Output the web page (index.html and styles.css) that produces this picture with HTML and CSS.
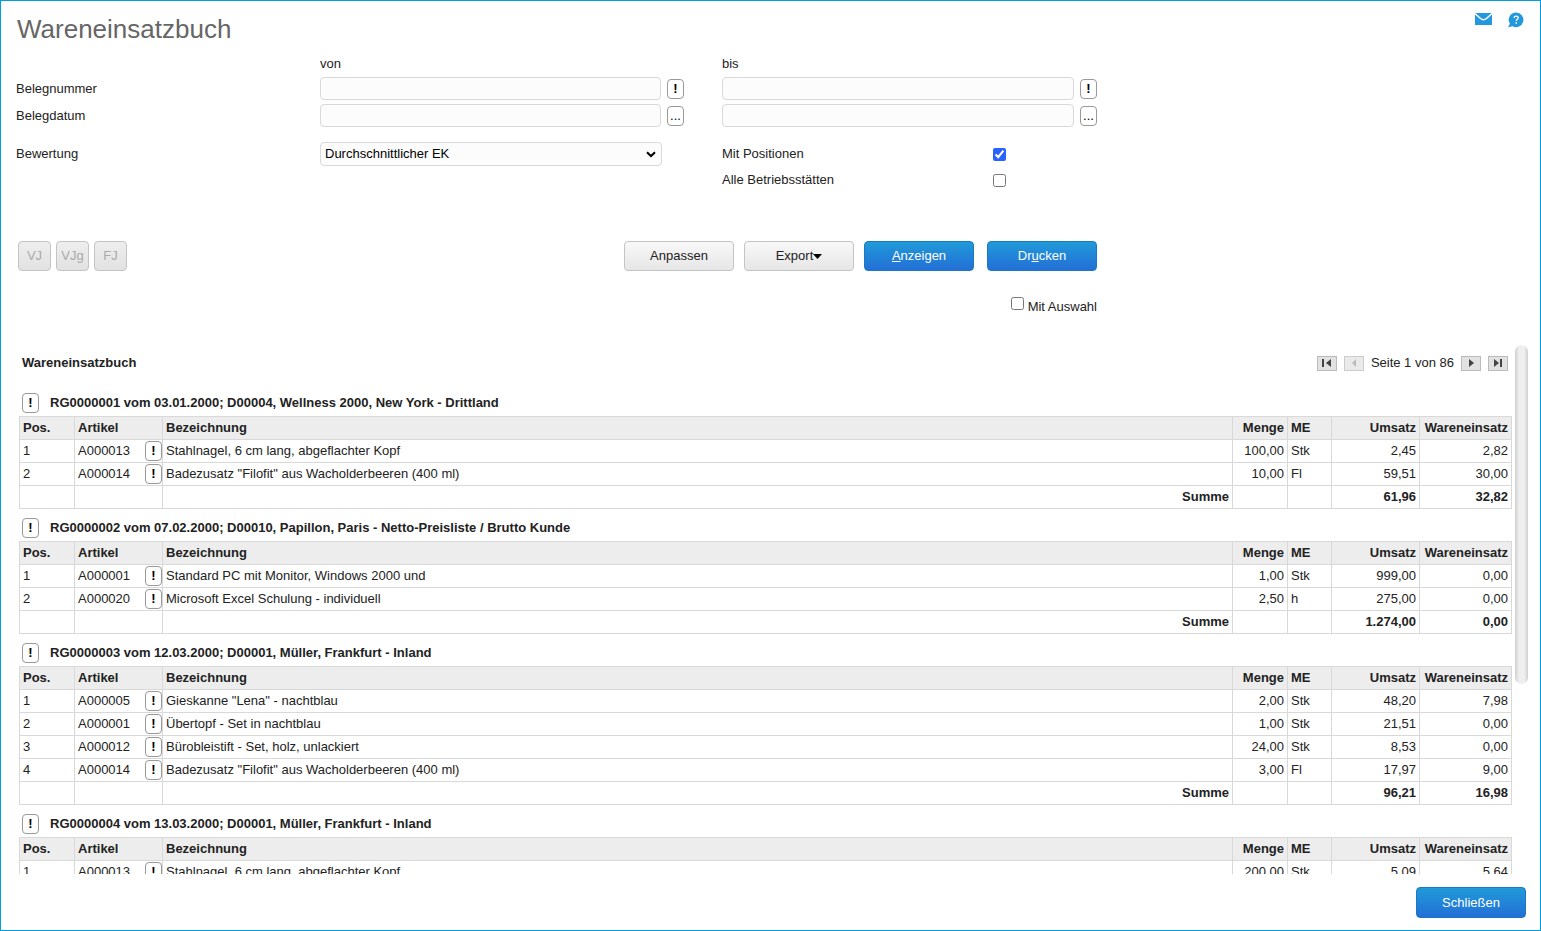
FILE: index.html
```html
<!DOCTYPE html>
<html lang="de">
<head>
<meta charset="utf-8">
<title>Wareneinsatzbuch</title>
<link rel="stylesheet" href="styles.css">
</head>
<body>
<div class="window">
  <header class="topbar">
    <h1 class="title">Wareneinsatzbuch</h1>
    <div class="tools">
      <button class="tool" type="button" aria-label="Nachricht">
        <svg width="18" height="14" viewBox="0 0 18 14"><rect x="0" y="1" width="17" height="12" fill="#2498de"/><path d="M0 1.500 5.500 6.500Q8.500 9 11.500 6.500L17 1.500" fill="none" stroke="#fff" stroke-width="1.500"/></svg>
      </button>
      <button class="tool" type="button" aria-label="Hilfe">
        <svg width="18" height="16" viewBox="0 0 18 16"><path d="M9.200 .5a7.300 7.300 0 1 1-3.600 13.700L1 15.200l1.900-3.500A7.300 7.300 0 0 1 9.200.5z" fill="#2498de"/><path d="M7.200 6c0-2.600 4-2.400 4-.2 0 1.400-2 1.500-2 3.300" fill="none" stroke="#fff" stroke-width="1.300"/><rect x="8.500" y="10.200" width="1.500" height="1.500" fill="#fff"/></svg>
      </button>
    </div>
  </header>

  <form class="form">
    <div class="filters">
      <span class="head head-from">von</span>
      <span class="head">bis</span>

      <label for="nr-from">Belegnummer</label>
      <div class="field field-from"><input class="text" id="nr-from" type="text"><button class="mini" type="button">!</button></div>
      <div class="field"><input class="text" id="nr-to" type="text" aria-label="Belegnummer bis"><button class="mini" type="button">!</button></div>

      <label for="date-from">Belegdatum</label>
      <div class="field field-from"><input class="text" id="date-from" type="text"><button class="mini mini-dots" type="button">...</button></div>
      <div class="field"><input class="text" id="date-to" type="text" aria-label="Belegdatum bis"><button class="mini mini-dots" type="button">...</button></div>
    </div>

    <div class="filters options">
      <label for="rating">Bewertung</label>
      <div class="select-box">
        <select class="select" id="rating"><option>Durchschnittlicher EK</option></select>
        <svg class="chevron" width="10" height="7" viewBox="0 0 10 7"><path d="M1 1.200 5 5 9 1.200" fill="none" stroke="#000" stroke-width="2"/></svg>
      </div>
      <div class="check-row"><label for="with-pos">Mit Positionen</label><input class="check" id="with-pos" type="checkbox" checked></div>
      <div class="check-row check-last"><label for="all-sites">Alle Betriebsstätten</label><input class="check" id="all-sites" type="checkbox"></div>
    </div>

    <div class="actions">
      <button class="btn btn-year" type="button" disabled>VJ</button>
      <button class="btn btn-year" type="button" disabled>VJg</button>
      <button class="btn btn-year" type="button" disabled>FJ</button>
      <div class="main-actions">
        <button class="btn" type="button">Anpassen</button>
        <button class="btn" type="button">Export<svg width="9" height="5" viewBox="0 0 9 5"><path d="M0 0h9L4.500 5z"/></svg></button>
        <button class="btn btn-primary" type="button"><span><u>A</u>nzeigen</span></button>
        <button class="btn btn-primary btn-print" type="button"><span>Dr<u>u</u>cken</span></button>
      </div>
    </div>
    <div class="selection"><input class="check" id="sel" type="checkbox"><label for="sel">Mit Auswahl</label></div>
  </form>

  <main class="report">
    <div class="report-body">
      <div class="report-head">
        <h2 class="report-title">Wareneinsatzbuch</h2>
        <nav class="pager">
          <button class="page" type="button" aria-label="Erste Seite"><svg width="10" height="8" viewBox="0 0 10 8"><path d="M0 0h2v8H0zM9 0v8L4 4z"/></svg></button>
          <button class="page" type="button" aria-label="Vorherige Seite" disabled><svg width="10" height="8" viewBox="0 0 10 8"><path d="M7 0v8L3 4z"/></svg></button>
          <span>Seite 1 von 86</span>
          <button class="page" type="button" aria-label="Nächste Seite"><svg width="10" height="8" viewBox="0 0 10 8"><path d="M3 0v8l5-4z"/></svg></button>
          <button class="page" type="button" aria-label="Letzte Seite"><svg width="10" height="8" viewBox="0 0 10 8"><path d="M1 0v8l5-4zM7 0h2v8H7z"/></svg></button>
        </nav>
      </div>

      <h3 class="doc"><button class="mini" type="button">!</button>RG0000001 vom 03.01.2000; D00004, Wellness 2000, New York - Drittland</h3>
      <table class="items">
        <thead><tr><th class="c-pos">Pos.</th><th class="c-art">Artikel</th><th>Bezeichnung</th><th class="c-qty num">Menge</th><th class="c-unit">ME</th><th class="c-sum num">Umsatz</th><th class="c-cost num">Wareneinsatz</th></tr></thead>
        <tbody>
          <tr><td>1</td><td><div class="art">A000013<button class="mini" type="button">!</button></div></td><td>Stahlnagel, 6 cm lang, abgeflachter Kopf</td><td class="num">100,00</td><td>Stk</td><td class="num">2,45</td><td class="num">2,82</td></tr>
          <tr><td>2</td><td><div class="art">A000014<button class="mini" type="button">!</button></div></td><td>Badezusatz "Filofit" aus Wacholderbeeren (400 ml)</td><td class="num">10,00</td><td>Fl</td><td class="num">59,51</td><td class="num">30,00</td></tr>
          <tr class="total"><td></td><td></td><td class="num">Summe</td><td></td><td></td><td class="num">61,96</td><td class="num">32,82</td></tr>
        </tbody>
      </table>

      <h3 class="doc"><button class="mini" type="button">!</button>RG0000002 vom 07.02.2000; D00010, Papillon, Paris - Netto-Preisliste / Brutto Kunde</h3>
      <table class="items">
        <thead><tr><th class="c-pos">Pos.</th><th class="c-art">Artikel</th><th>Bezeichnung</th><th class="c-qty num">Menge</th><th class="c-unit">ME</th><th class="c-sum num">Umsatz</th><th class="c-cost num">Wareneinsatz</th></tr></thead>
        <tbody>
          <tr><td>1</td><td><div class="art">A000001<button class="mini" type="button">!</button></div></td><td>Standard PC mit Monitor, Windows 2000 und</td><td class="num">1,00</td><td>Stk</td><td class="num">999,00</td><td class="num">0,00</td></tr>
          <tr><td>2</td><td><div class="art">A000020<button class="mini" type="button">!</button></div></td><td>Microsoft Excel Schulung - individuell</td><td class="num">2,50</td><td>h</td><td class="num">275,00</td><td class="num">0,00</td></tr>
          <tr class="total"><td></td><td></td><td class="num">Summe</td><td></td><td></td><td class="num">1.274,00</td><td class="num">0,00</td></tr>
        </tbody>
      </table>

      <h3 class="doc"><button class="mini" type="button">!</button>RG0000003 vom 12.03.2000; D00001, Müller, Frankfurt - Inland</h3>
      <table class="items">
        <thead><tr><th class="c-pos">Pos.</th><th class="c-art">Artikel</th><th>Bezeichnung</th><th class="c-qty num">Menge</th><th class="c-unit">ME</th><th class="c-sum num">Umsatz</th><th class="c-cost num">Wareneinsatz</th></tr></thead>
        <tbody>
          <tr><td>1</td><td><div class="art">A000005<button class="mini" type="button">!</button></div></td><td>Gieskanne "Lena" - nachtblau</td><td class="num">2,00</td><td>Stk</td><td class="num">48,20</td><td class="num">7,98</td></tr>
          <tr><td>2</td><td><div class="art">A000001<button class="mini" type="button">!</button></div></td><td>Übertopf - Set in nachtblau</td><td class="num">1,00</td><td>Stk</td><td class="num">21,51</td><td class="num">0,00</td></tr>
          <tr><td>3</td><td><div class="art">A000012<button class="mini" type="button">!</button></div></td><td>Bürobleistift - Set, holz, unlackiert</td><td class="num">24,00</td><td>Stk</td><td class="num">8,53</td><td class="num">0,00</td></tr>
          <tr><td>4</td><td><div class="art">A000014<button class="mini" type="button">!</button></div></td><td>Badezusatz "Filofit" aus Wacholderbeeren (400 ml)</td><td class="num">3,00</td><td>Fl</td><td class="num">17,97</td><td class="num">9,00</td></tr>
          <tr class="total"><td></td><td></td><td class="num">Summe</td><td></td><td></td><td class="num">96,21</td><td class="num">16,98</td></tr>
        </tbody>
      </table>

      <h3 class="doc"><button class="mini" type="button">!</button>RG0000004 vom 13.03.2000; D00001, Müller, Frankfurt - Inland</h3>
      <table class="items">
        <thead><tr><th class="c-pos">Pos.</th><th class="c-art">Artikel</th><th>Bezeichnung</th><th class="c-qty num">Menge</th><th class="c-unit">ME</th><th class="c-sum num">Umsatz</th><th class="c-cost num">Wareneinsatz</th></tr></thead>
        <tbody>
          <tr><td>1</td><td><div class="art">A000013<button class="mini" type="button">!</button></div></td><td>Stahlnagel, 6 cm lang, abgeflachter Kopf</td><td class="num">200,00</td><td>Stk</td><td class="num">5,09</td><td class="num">5,64</td></tr>
        </tbody>
      </table>
    </div>
    <div class="scrollbar"><div class="thumb"></div></div>
  </main>

  <footer class="footer"><button class="btn btn-primary" type="button">Schließen</button></footer>
</div>
</body>
</html>
```
FILE: styles.css
```css
* { box-sizing: border-box; }
body {
  margin: 0;
  font: 13px/16px "Liberation Sans", Arial, sans-serif;
  color: #222;
  background: #fff;
}
button, input, select { font: inherit; color: inherit; margin: 0; }
h1, h2, h3 { margin: 0; font-size: 13px; }

.window {
  display: flex;
  flex-direction: column;
  height: 100vh;
  border: 1px solid #009fe3;
}

.topbar {
  display: flex;
  justify-content: space-between;
  padding: 11px 15px 0 16px;
}
.title { font-size: 26px; line-height: 34px; font-weight: normal; color: #666; }
.tools { display: flex; gap: 14px; }
.tool { display: flex; height: 16px; padding: 0; border: 0; background: none; }

.form { max-width: 1096px; padding: 9px 0 0 15px; }
.filters {
  display: grid;
  grid-template-columns: 304px minmax(0, 402fr) minmax(0, 375fr);
  row-gap: 4px;
  align-items: center;
}
.head { height: 18px; line-height: 18px; }
.head-from { grid-column: 2; }
.field { display: flex; align-items: center; gap: 6px; }
.field-from { padding-right: 38px; }
.text, .select {
  flex: 1;
  min-width: 0;
  height: 23px;
  border: 1px solid #d9d9d9;
  border-radius: 4px;
  background: #fcfcfc;
}
.mini {
  flex: none;
  width: 17px;
  height: 20px;
  padding: 0;
  border: 1px solid #999;
  border-radius: 4px;
  background: #fff;
  color: #000;
  font-weight: bold;
  line-height: 16px;
  text-align: center;
}
.mini-dots { font-weight: normal; }

.options { margin-top: 15px; row-gap: 2px; }
.select-box { position: relative; margin-right: 60px; }
.select {
  display: block;
  width: 100%;
  height: 24px;
  padding: 0 4px;
  appearance: none;
  color: #000;
}
.chevron { position: absolute; right: 6px; top: 9px; pointer-events: none; }
.check-row { display: flex; justify-content: space-between; align-items: center; height: 24px; padding-right: 91px; }
.check-last { grid-column: 3; }
.check { width: 13px; height: 13px; accent-color: #2962ff; }

.actions { display: flex; gap: 5px; margin: 49px 0 0 2px; }
.main-actions { display: flex; gap: 10px; margin-left: auto; }
.btn {
  display: flex;
  align-items: center;
  justify-content: center;
  width: 110px;
  height: 30px;
  padding: 0;
  border: 1px solid #c4c4c4;
  border-radius: 4px;
  background: linear-gradient(#f8f8f8, #e6e6e6);
}
.btn-year { width: 33px; color: #aaa; background: linear-gradient(#eee, #e2e2e2); }
.btn-primary { border-color: #1b79c4; background: linear-gradient(#209ad8, #236fd6); color: #fff; }
.btn-print { margin-left: 3px; }
.selection { display: flex; justify-content: flex-end; gap: 4px; padding-top: 26px; }
.selection label { padding-top: 2px; }

.report { display: flex; flex: 1; min-height: 0; margin: 30px 12px 0 18px; gap: 3px; }
.report-body { flex: 1; min-width: 0; overflow: hidden; }
.report-head { display: flex; justify-content: space-between; align-items: center; height: 36px; padding: 0 4px 0 3px; }
.pager { display: flex; align-items: center; gap: 7px; }
.page {
  display: flex;
  align-items: center;
  justify-content: center;
  width: 20px;
  height: 15px;
  padding: 0;
  border: 1px solid #bbb;
  background: #e2e2e2;
  fill: #444;
}
.page:disabled { background: #eaeaea; border-color: #ccc; fill: #bbb; }

.doc { display: flex; align-items: center; gap: 11px; height: 32px; padding: 5px 0 0 3px; }
.report-head + .doc { height: 35px; padding-top: 8px; }
.items { width: 100%; border-collapse: collapse; table-layout: fixed; }
.items th, .items td { height: 23px; padding: 0 3px; border: 1px solid #d9d9d9; text-align: left; white-space: nowrap; }
.items th { background: #ededed; }
.items .num { text-align: right; }
.total { font-weight: bold; }
.c-pos { width: 55px; }
.c-art { width: 88px; }
.c-qty { width: 55px; }
.c-unit { width: 44px; }
.c-sum { width: 88px; }
.c-cost { width: 92px; }
.art { display: flex; justify-content: space-between; align-items: center; margin-right: -3px; }

.scrollbar { width: 13px; }
.thumb {
  height: 64%;
  border-radius: 7px;
  background: linear-gradient(90deg, #cfcfcf, #eee 30%, #f0f0f0 70%, #cfcfcf);
}

.footer { display: flex; justify-content: flex-end; padding: 13px 14px 12px 0; }
.footer .btn { height: 31px; }
```
